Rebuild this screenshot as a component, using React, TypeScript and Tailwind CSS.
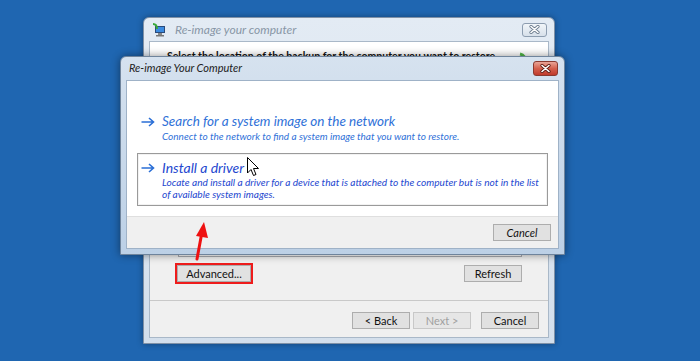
import * as React from "react";

// Windows recovery "Re-image" dialogs stacked on a blue desktop.
const ui = { fontFamily: 'Lato, "Noto Sans", Arial, sans-serif' };

function CloseButton({ active }: { active?: boolean }) {
  return (
    <div
      className={
        active
          ? "flex items-center justify-center w-[25px] h-[15px] rounded-[3px] border border-[#8a3a30] bg-gradient-to-b from-[#e8a497] via-[#d4604d] to-[#c0392b]"
          : "flex items-center justify-center w-[25px] h-[14px] rounded-[3px] border border-[#8d9db0] bg-gradient-to-b from-[#f1f5f9] to-[#d7e0ea]"
      }
    >
      <svg width="11" height="9" viewBox="0 0 11 9">
        <path
          d="M2 1.5 L9 7.5 M9 1.5 L2 7.5"
          stroke={active ? "#5a1a12" : "#6b7b8d"}
          strokeWidth="3.2"
          strokeLinecap="round"
        />
        <path
          d="M2 1.5 L9 7.5 M9 1.5 L2 7.5"
          stroke="#ffffff"
          strokeWidth="1.6"
          strokeLinecap="round"
        />
      </svg>
    </div>
  );
}

function Btn({
  label,
  disabled,
  italic,
  w = "w-[58px]",
}: {
  label: string;
  disabled?: boolean;
  italic?: boolean;
  w?: string;
}) {
  return (
    <div
      className={`${w} h-[17px] flex items-center justify-center border text-[11px] leading-none whitespace-nowrap ${
        disabled
          ? "text-[#a0a0a0] border-[#c8c8c8] bg-[#e6e6e6]"
          : "text-[#111] border-[#adadad] bg-[#e1e1e1]"
      } ${italic ? "italic" : ""}`}
    >
      {label}
    </div>
  );
}

function BlueArrow() {
  return (
    <svg width="14" height="10" viewBox="0 0 14 10" className="shrink-0">
      <path
        d="M0.5 5 H12.5 M8 1 L12.5 5 L8 9"
        fill="none"
        stroke="#2b6fd6"
        strokeWidth="1.6"
        strokeLinejoin="miter"
      />
    </svg>
  );
}

function BackWindow() {
  return (
    <div className="absolute left-[143px] top-[17px] w-[412px] h-[327px] flex flex-col rounded-t-[6px] border border-[#8091a6] bg-gradient-to-b from-[#e3ebf4] to-[#d3dfec] shadow-[0_0_6px_rgba(0,0,0,0.35)]">
      <div className="h-[23px] flex items-center pl-[8px] pr-[7px]">
        <svg width="14" height="14" viewBox="0 0 14 14" className="mr-[9px]">
          <rect x="3" y="3" width="10" height="7" fill="#2a4a7a" />
          <rect x="4" y="4" width="8" height="5" fill="#3c8be0" />
          <rect x="6" y="10" width="4" height="2" fill="#888" />
          <rect x="4" y="12" width="8" height="1.5" fill="#777" />
          <path d="M1 1 Q5 1 5 6" fill="none" stroke="#3aa83a" strokeWidth="2" />
        </svg>
        <span className="italic text-[12px] text-[#8896a6] whitespace-nowrap">Re-image your computer</span>
        <div className="flex-1" />
        <CloseButton />
      </div>
      <div className="mx-[5px] mb-[5px] flex-1 flex flex-col bg-[#f0f0f0] border border-[#a9b8c8]">
        <div className="h-[60px] bg-white flex items-start justify-between pl-[17px] pr-[14px] pt-[6px]">
          <span className="font-bold text-[10.5px] leading-[16px] text-[#111] whitespace-nowrap">
            Select the location of the backup for the computer you want to restore
          </span>
          <svg width="16" height="14" viewBox="0 0 16 14" className="mt-[4px]">
            <path d="M2 2 Q8 3 7 12" fill="none" stroke="#52b848" strokeWidth="3" />
            <path d="M7 12 L15 12" stroke="#9aa4b0" strokeWidth="1.5" />
          </svg>
        </div>
        <div className="mt-[9px] ml-[28px] mr-[26px] h-[146px] bg-white border border-[#abadb3]" />
        <div className="mt-[8px] flex justify-between pl-[27px] pr-[26px]">
          <div className="border-2 border-[#ee1c1c] -m-[2px]">
            <Btn label="Advanced..." w="w-[74px]" />
          </div>
          <Btn label="Refresh" />
        </div>
        <div className="mt-[18px] h-px bg-[#c9c9c9]" />
        <div className="mt-[11px] flex justify-end pr-[9px]">
          <Btn label="< Back" />
          <div className="w-[3px]" />
          <Btn label="Next >" disabled />
          <div className="w-[10px]" />
          <Btn label="Cancel" />
        </div>
      </div>
    </div>
  );
}

function FrontWindow() {
  return (
    <div className="absolute left-[120px] top-[56px] w-[445px] h-[199px] flex flex-col rounded-t-[6px] border border-[#6f849c] bg-gradient-to-b from-[#d6e2ef] to-[#bcd0e6] shadow-[0_0_8px_rgba(0,0,0,0.45)]">
      <div className="h-[23px] flex items-center pl-[8px] pr-[6px]">
        <span className="italic text-[11px] text-[#222] whitespace-nowrap">Re-image Your Computer</span>
        <div className="flex-1" />
        <CloseButton active />
      </div>
      <div className="mx-[5px] mb-[5px] flex-1 flex flex-col bg-[#f0f0f0] border border-[#9fb2c7]">
        <div className="h-[135px] bg-white pt-[32px] pl-[10px] pr-[10px]">
          <div className="flex flex-col pl-[4px] h-[40px]">
            <div className="flex items-center gap-[7px]">
              <BlueArrow />
              <span className="italic text-[13.5px] leading-[17px] text-[#2f71d8] whitespace-nowrap">
                Search for a system image on the network
              </span>
            </div>
            <span className="pl-[21px] italic text-[10px] leading-[13px] text-[#2f71d8] whitespace-nowrap">
              Connect to the network to find a system image that you want to restore.
            </span>
          </div>
          <div className="h-[53px] border border-[#9a9a9a] pl-[3px] pt-[5px] flex flex-col shadow-[inset_0_0_0_1px_#f2f2f2]">
            <div className="flex items-center gap-[7px]">
              <BlueArrow />
              <span className="italic text-[14px] leading-[17px] text-[#2447cf] whitespace-nowrap">Install a driver</span>
            </div>
            <span className="pl-[21px] italic text-[10.1px] leading-[12px] text-[#2447cf] whitespace-nowrap">
              Locate and install a driver for a device that is attached to the computer but is not in the list
              <br />
              of available system images.
            </span>
          </div>
        </div>
        <div className="flex-1 border-t border-[#dfdfdf] flex items-start justify-end pt-[7px] pr-[7px]">
          <Btn label="Cancel" italic />
        </div>
      </div>
    </div>
  );
}

export default function App() {
  return (
    <div className="relative w-[700px] h-[361px] overflow-hidden bg-[#1f66b1]" style={ui}>
      <BackWindow />
      <FrontWindow />
      {/* red annotation arrow */}
      <svg className="absolute left-0 top-0" width="700" height="361">
        <path d="M197 259 L202 232" stroke="#ee1111" strokeWidth="3" strokeLinecap="round" />
        <path d="M196 236 L204 222 L208 238 Z" fill="#ee1111" />
      </svg>
      {/* mouse pointer */}
      <svg className="absolute left-[247px] top-[157px]" width="13" height="20" viewBox="0 0 13 20">
        <path
          d="M0.5 0.5 L0.5 16 L4 12.5 L6.5 18.5 L9 17.5 L6.5 11.5 L11.5 11.5 Z"
          fill="#ffffff"
          stroke="#000"
          strokeWidth="1"
          strokeLinejoin="round"
        />
      </svg>
    </div>
  );
}
